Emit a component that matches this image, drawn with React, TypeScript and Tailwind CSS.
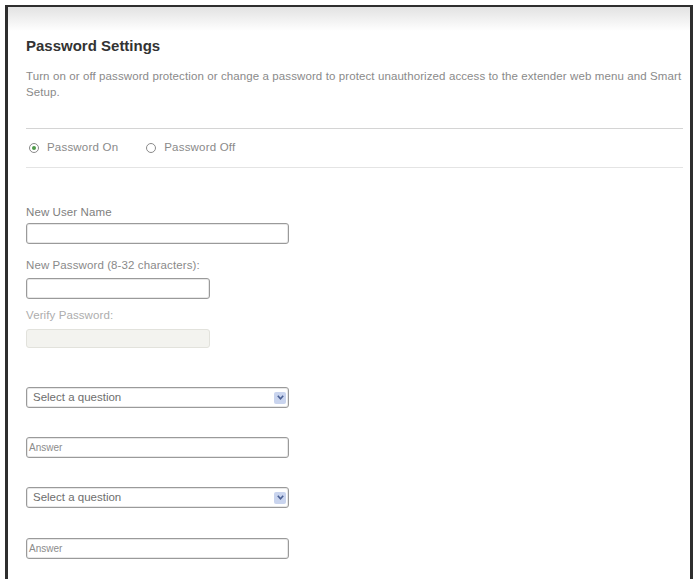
import React from 'react';

function Radio({ checked, label }: { checked?: boolean; label: string }) {
  return (
    <div className="flex items-center gap-[8px]">
      <span className="flex h-[10px] w-[10px] items-center justify-center rounded-full border border-[#8a8a8a] bg-white">
        {checked && <span className="h-[4px] w-[4px] rounded-full bg-[#4f9a4a]" />}
      </span>
      <span>{label}</span>
    </div>
  );
}

function TextBox({ w, placeholder, disabled }: { w: string; placeholder?: string; disabled?: boolean }) {
  return (
    <div
      className={
        disabled
          ? `${w} h-[19px] rounded-[3px] border border-[#e2e2dc] bg-[#f3f3ef]`
          : `${w} flex h-[21px] items-center rounded-[3px] border border-[#9a9a9a] bg-white pl-[2px] text-[10px] text-[#8c8c8c] shadow-[inset_0_0_0_1px_#e8e8e8]`
      }
    >
      {placeholder}
    </div>
  );
}

function QuestionSelect() {
  return (
    <div className="flex h-[21px] w-[263px] items-center justify-between rounded-[3px] border border-[#9a9a9a] bg-white pl-[6px] pr-[2px] text-[11.5px] text-[#6e6e6e] shadow-[inset_0_0_0_1px_#e8e8e8]">
      <span>Select a question</span>
      <span className="flex h-[12px] w-[12px] items-center justify-center rounded-[2px] bg-[#c9d4ee]">
        <svg width="7" height="5" viewBox="0 0 7 5">
          <path d="M0.8 0.8 L3.5 3.8 L6.2 0.8" fill="none" stroke="#4a5f93" strokeWidth="1.6" />
        </svg>
      </span>
    </div>
  );
}

export default function App() {
  return (
    <div className="h-[579px] w-[695px] overflow-hidden bg-white pl-[5px] pr-[2px] pt-[5px] font-['Liberation_Sans',Arial,sans-serif]">
      <div className="h-[577px] border-b-[3px] border-l-[3px] border-r-[3px] border-t-2 border-[#2e2e2e] bg-[linear-gradient(to_bottom,#e2e2e2_0px,#ffffff_24px)] pl-[18px] pr-[6px] pt-[30px]">
        <h1 className="text-[15px] font-bold leading-[18px] text-[#333]">Password Settings</h1>
        <p className="mt-[13px] w-[662px] text-[11.5px] leading-[16px] tracking-[0.1px] text-[#8a8a8a]">
          Turn on or off password protection or change a password to protect unauthorized access to the extender web menu and Smart Setup.
        </p>
        <div className="mt-[28px] h-px w-[657px] bg-[#d4d4d4]" />
        <div className="mt-[11px] flex h-[16px] items-center gap-[28px] pl-[3px] text-[11.5px] tracking-[0.2px] text-[#8a8a8a]">
          <Radio checked label="Password On" />
          <Radio label="Password Off" />
        </div>
        <div className="mt-[11px] h-px w-[657px] bg-[#e4e4e4]" />

        <div className="mt-[37px] text-[11.5px] leading-[14px] tracking-[0.1px] text-[#808080]">New User Name</div>
        <div className="mt-[4px]"><TextBox w="w-[263px]" /></div>
        <div className="mt-[14px] text-[11.5px] leading-[14px] tracking-[0.1px] text-[#8a8a8a]">New Password (8-32 characters):</div>
        <div className="mt-[6px]"><TextBox w="w-[184px]" /></div>
        <div className="mt-[9px] text-[11.5px] leading-[14px] tracking-[0.1px] text-[#adadad]">Verify Password:</div>
        <div className="mt-[7px]"><TextBox w="w-[184px]" disabled /></div>

        <div className="mt-[39px]"><QuestionSelect /></div>
        <div className="mt-[29px]"><TextBox w="w-[263px]" placeholder="Answer" /></div>
        <div className="mt-[29px]"><QuestionSelect /></div>
        <div className="mt-[30px]"><TextBox w="w-[263px]" placeholder="Answer" /></div>
      </div>
    </div>
  );
}
